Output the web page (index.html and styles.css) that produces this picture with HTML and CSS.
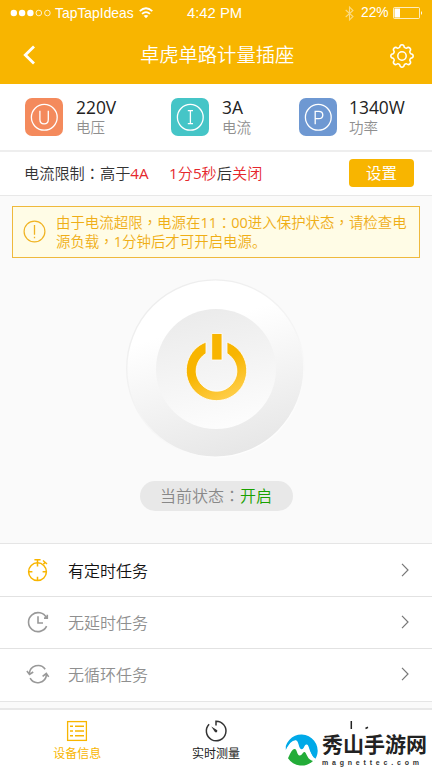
FILE: index.html
```html
<!DOCTYPE html>
<html lang="zh-CN">
<head>
<meta charset="utf-8">
<title>卓虎单路计量插座</title>
<link rel="stylesheet" href="styles.css">
</head>
<body>
<div class="app">
  <header class="header">
    <div class="status">
      <svg class="signal" width="41" height="12" viewBox="0 0 41 12"><g fill="#fff"><circle cx="3.8" cy="6" r="3.2"/><circle cx="12.1" cy="6" r="3.2"/><circle cx="20.4" cy="6" r="3.2"/></g><g fill="none" stroke="#fff" stroke-width=".8"><circle cx="28.8" cy="6" r="2.8"/><circle cx="37.4" cy="6" r="2.8"/></g></svg>
      <span class="carrier">TapTapIdeas</span>
      <svg class="wifi" width="14" height="12" viewBox="0 0 14 12"><g fill="none" stroke="#fff" stroke-width="1.8"><path d="M.7 4.2Q7-1.6 13.3 4.2M3 6.9Q7 3.3 11 6.9"/></g><path d="M4.6 8.8Q7 7 9.4 8.8L7 11.2Z" fill="#fff"/></svg>
      <span class="time">4:42 PM</span>
      <svg class="bluetooth" width="9" height="15" viewBox="0 0 9 15"><path d="M.7 4L8 10.5 4.5 14V1L8 4.5.7 11" fill="none" stroke="#fff" opacity=".5" stroke-width="1.1"/></svg>
      <span class="percent">22%</span>
      <svg class="battery" width="30" height="12" viewBox="0 0 30 12"><rect x=".5" y=".5" width="26" height="11" rx="1" fill="none" stroke="#fff" stroke-opacity=".75"/><path d="M1.5 1.5H7v9H1.5z" fill="#fff"/><path d="M28 4q2 2 0 4z" fill="#fff"/></svg>
    </div>
    <div class="navbar">
      <svg class="back" width="13" height="20" viewBox="0 0 13 20"><path d="M11 1.5L2.3 10 11 18.5" fill="none" stroke="#fff" stroke-width="2.8"/></svg>
      <h1>卓虎单路计量插座</h1>
      <svg class="gear" width="26" height="26" viewBox="0 0 26 26"><g fill="none" stroke="#fff" stroke-width="1.5" stroke-linejoin="round"><path d="M10.7 4.3Q11 1.8 13 1.8T15.3 4.3Q16.2 5.3 17.5 5.2Q19.4 3.6 20.9 5.1T20.8 8.5Q20.7 9.8 21.7 10.7Q24.2 11 24.2 13T21.7 15.3Q20.7 16.2 20.8 17.5Q22.4 19.4 20.9 20.9T17.5 20.8Q16.2 20.7 15.3 21.7Q15 24.2 13 24.2T10.7 21.7Q9.8 20.7 8.5 20.8Q6.6 22.4 5.1 20.9T5.2 17.5Q5.3 16.2 4.3 15.3Q1.8 15 1.8 13T4.3 10.7Q5.3 9.8 5.2 8.5Q3.6 6.6 5.1 5.1T8.5 5.2Q9.8 5.3 10.7 4.3Z"/><circle cx="13" cy="13" r="4.2"/></g></svg>
    </div>
  </header>

  <section class="metrics">
    <div class="metric">
      <svg class="badge voltage" width="38" height="38" viewBox="0 0 38 38"><g fill="none" stroke="#fff" stroke-width="1.3"><circle cx="19.3" cy="19.3" r="12.9"/><path d="M14.9 12.8V21.5Q14.9 25.8 19.1 25.8T23.3 21.5V12.8"/></g></svg>
      <div><div class="value">220V</div><div class="label">电压</div></div>
    </div>
    <div class="metric">
      <svg class="badge current" width="38" height="38" viewBox="0 0 38 38"><g fill="none" stroke="#fff" stroke-width="1.3"><circle cx="19.3" cy="19.3" r="12.9"/><path d="M16.8 12.7H22M16.8 25.7H22M19.4 12.7V25.7"/></g></svg>
      <div><div class="value">3A</div><div class="label">电流</div></div>
    </div>
    <div class="metric">
      <svg class="badge power" width="38" height="38" viewBox="0 0 38 38"><g fill="none" stroke="#fff" stroke-width="1.3"><circle cx="19.3" cy="19.3" r="12.9"/><path d="M16.2 26.3V13.3H19.7Q23.8 13.3 23.8 16.9T19.7 20.7H16.2"/></g></svg>
      <div><div class="value">1340W</div><div class="label">功率</div></div>
    </div>
  </section>

  <section class="limit">
    <span class="limit-text">电流限制<i lang="zh-TW">：</i>高于<em><b>4A</b></em></span>
    <span class="limit-time"><em><b>1</b>分<b>5</b>秒</em>后<em>关闭</em></span>
    <button class="set">设置</button>
  </section>

  <main class="control">
    <div class="notice">
      <svg width="23" height="23" viewBox="0 0 23 23"><circle cx="11.5" cy="11.5" r="10.4" fill="none" stroke="#f0b323" stroke-width="1.2"/><path d="M11.5 5V14.8M11.5 16.7V18.2" stroke="#f0b323" stroke-width="1.3"/></svg>
      <p>由于电流超限<i lang="zh-TW">，</i>电源在<b>11</b><i lang="zh-TW">：</i><b>00</b>进入保护状态<i lang="zh-TW">，</i>请检查电<br>源负载<i lang="zh-TW">，</i><b>1</b>分钟后才可开启电源。</p>
    </div>
    <svg class="dial" width="184" height="184" viewBox="0 0 184 184">
      <defs>
        <linearGradient id="outer" x1=".35" y1="0" x2=".65" y2="1"><stop offset=".25" stop-color="#fff"/><stop offset="1" stop-color="#e6e6e6"/></linearGradient>
        <linearGradient id="rim" x1=".2" y1="0" x2=".8" y2="1"><stop offset="0" stop-color="#ececec"/><stop offset=".5" stop-color="#f4f4f4"/><stop offset="1" stop-color="#fff"/></linearGradient>
        <linearGradient id="inner" x1=".38" y1="0" x2=".62" y2="1"><stop offset="0" stop-color="#ebebeb"/><stop offset="1" stop-color="#fdfdfd"/></linearGradient>
        <linearGradient id="gold" x1=".25" y1="0" x2=".75" y2="1"><stop offset=".4" stop-color="#f8b500"/><stop offset="1" stop-color="#ffd050"/></linearGradient>
      </defs>
      <circle cx="91.3" cy="92.5" r="88.6" fill="url(#outer)" stroke="url(#rim)" stroke-width="1.4"/>
      <circle cx="92" cy="93" r="60" fill="url(#inner)"/>
      <g stroke="#fff" stroke-opacity=".8" stroke-width="1">
        <path d="M82 66.1A30.2 30.2 0 1 0 103 66.1V77.4A20.4 20.4 0 1 1 82 77.4Z" fill="url(#gold)"/>
        <path d="M87.7 57.5H98V84H87.7Z" fill="#f8b500"/>
      </g>
    </svg>
    <div class="state">当前状态<i lang="zh-TW">：</i><span class="on">开启</span></div>
  </main>

  <ul class="tasks">
    <li class="active">
      <svg width="24" height="24" viewBox="0 0 24 24"><g fill="none" stroke="#f8b500" stroke-width="1.5"><circle cx="11.5" cy="13.7" r="8.9"/><path d="M8.4 1.8H14.6M11.5 1.8V5M17 2.5L21 6M19.2 4.2L17.4 6.3M11.5 5V8.6M11.5 18.8V22.3M2.8 13.7H6.4M16.6 13.7H20.2"/></g></svg>
      <span>有定时任务</span>
      <svg class="arrow" width="8" height="14" viewBox="0 0 8 14"><path d="M1 .8L7 7 1 13.2"/></svg>
    </li>
    <li>
      <svg width="24" height="24" viewBox="0 0 24 24"><g fill="none" stroke="#999" stroke-width="1.6"><path d="M20.5 7.8A9.5 9.5 0 1 0 20.6 16.2M21.3 4.8V8.1H18M12 6.3V13H17"/></g></svg>
      <span>无延时任务</span>
      <svg class="arrow" width="8" height="14" viewBox="0 0 8 14"><path d="M1 .8L7 7 1 13.2"/></svg>
    </li>
    <li>
      <svg width="24" height="24" viewBox="0 0 24 24"><g fill="none" stroke="#999" stroke-width="1.6"><path d="M3.3 11.5A8.8 8.8 0 0 1 19.2 7.2M20.5 12.6A8.8 8.8 0 0 1 4.1 16.2M.9 9.1L3.5 12.5 7.2 10M16.6 14.3L20.3 11.5 22.7 14.9"/></g></svg>
      <span>无循环任务</span>
      <svg class="arrow" width="8" height="14" viewBox="0 0 8 14"><path d="M1 .8L7 7 1 13.2"/></svg>
    </li>
  </ul>

  <nav class="tabs">
    <a class="tab selected">
      <svg width="22" height="22" viewBox="0 0 22 22"><g fill="none" stroke="#f8b500"><rect x="1.6" y="1.6" width="18.8" height="18.8" stroke-width="1.3"/><path d="M4 6.2H7M4 11H7M4 15.8H7M9 6.2H18M9 11H18M9 15.8H18" stroke-width="1.6"/></g></svg>
      <span>设备信息</span>
    </a>
    <a class="tab">
      <svg width="22" height="22" viewBox="0 0 22 22"><path d="M11 5.4V1.2A9.8 9.8 0 1 1 4.1 4.2" fill="none" stroke="#333" stroke-width="1.5"/><path d="M6.3 6.5L12.3 10.3 12 12.2 10.1 12.2Z" fill="#333"/></svg>
      <span>实时测量</span>
    </a>
    <a class="tab">
      <svg width="22" height="22" viewBox="0 0 22 22"><path d="M7.3 1V9M21.5 8.5L24 7.3" stroke="#222" stroke-width="1.5"/></svg>
    </a>
    <div class="brand">
      <svg width="34" height="34" viewBox="0 0 34 34"><path d="M.8 14A16.3 16.3 0 1 1 29.5 28.5L22 13 16 19.5 10.5 8.5Q4 11 .8 18Z" fill="#00a9e8"/><path d="M.8 19Q5 8 10.8 8.2C14 8.5 13.5 17 16.5 17.2S19 12 21.8 12.5C25 13 23.5 23 31 27L27.5 30.3 20 20 14 25 9 17Q4 18 .8 19Z" fill="#fff"/><path d="M3 26.3Q7 16.5 9.8 17C12 17.2 12 23.3 14.7 23.5S18 19 20 20.3C22 22 22.5 28 28 28.9A16.3 16.3 0 0 1 3 26.3Z" fill="#23ac38"/></svg>
      <div><div class="brand-name">秀山手游网</div><div class="brand-url">magnettec.com</div></div>
    </div>
  </nav>
</div>
</body>
</html>
```

FILE: styles.css
```css
* { box-sizing: border-box; margin: 0; padding: 0; }
body { font-family: "Open Sans", "Noto Sans CJK SC", sans-serif; color: #333; background: #fafafa; }
svg { display: block; flex: none; overflow: visible; }
em { font-style: normal; color: #e5282d; }
/* latin digits keep the regular weight beside the lighter CJK text */
b { font-weight: 400; }
/* full-width punctuation centred in its cell */
i { font-style: normal; font-family: "Noto Sans CJK TC", sans-serif; line-height: 1; }
.app { width: 432px; height: 768px; overflow: hidden; display: flex; flex-direction: column; }

.header { height: 84px; flex: none; background: #f8b500; color: #fff; }
.status { height: 26px; display: flex; align-items: center; padding-left: 10px; font: 13.9px/26px "Liberation Sans", sans-serif; white-space: nowrap; }
.carrier { width: 79px; margin-left: 4px; }
.wifi { margin-left: 5px; }
.time { width: 57px; margin-left: 34px; font-size: 14.8px; }
.bluetooth { margin-left: 101px; }
.percent { width: 28px; margin-left: 7px; font-size: 13.8px; }
.battery { margin-left: 4px; }
.navbar { height: 58px; display: flex; align-items: center; padding-left: 23px; }
.back { margin-right: 104px; }
h1 { width: 154px; font-size: 19.3px; line-height: 28px; font-weight: 350; white-space: nowrap; }
.gear { margin: 2px 0 0 95px; }

.metrics { height: 68px; flex: none; display: grid; grid-template-columns: 146px 128px 1fr; padding: 14px 0 0 25px; background: #fff; border-bottom: 2px solid #eee; }
.metric { display: flex; gap: 13px; }
.metric:last-child { gap: 12px; }
.badge { border-radius: 7px; }
.voltage { background: #f48a5c; }
.current { background: #45c5c7; }
.power { background: #6e98d2; }
.value { font-size: 17.4px; line-height: 19px; color: #222; }
.label { font: 350 14.5px/20px "Noto Sans CJK SC", sans-serif; color: #8f8f8f; }

.limit { height: 44px; flex: none; display: flex; align-items: center; padding-left: 24px; background: #fff; border-bottom: 1px solid #e8e8e8; font-size: 15.2px; font-weight: 350; white-space: nowrap; }
.limit span { margin-top: -3px; }
.limit-text { width: 145px; }
.limit-time { width: 180px; }
.set { width: 65px; height: 28px; margin-top: -1px; padding-bottom: 2px; border: 0; border-radius: 4px; background: #f8b500; color: #fff; font: 15.4px/26px "Noto Sans CJK SC", sans-serif; }

.control { height: 347px; flex: none; display: flex; flex-direction: column; align-items: center; padding-top: 10px; }
.notice { width: 408px; height: 52px; display: flex; padding: 13px 0 0 10px; border: 1px solid #efb93c; background: #fffce6; }
.notice p { margin: -7px 0 0 10px; font-size: 14.45px; line-height: 19px; font-weight: 350; color: #efae16; white-space: nowrap; }
.dial { margin-top: 18px; }
.state { width: 153px; height: 30px; margin-top: 21px; border-radius: 15px; background: #e8e8e8; text-align: center; font-size: 16px; line-height: 30px; font-weight: 350; color: #888; white-space: nowrap; }
.on { color: #19a100; }

.tasks { list-style: none; flex: none; height: 159px; background: #fff; border-top: 1px solid #e5e5e5; border-bottom: 1px solid #e5e5e5; }
.tasks li { height: 52px; display: flex; align-items: center; padding: 0 23px 1px 26px; font-size: 16px; font-weight: 350; color: #8f8f8f; }
.tasks li:first-child { padding-bottom: 0; }
.tasks li:last-child { height: 53px; padding-bottom: 2px; }
.tasks li + li { border-top: 1px solid #e2e2e2; }
.tasks .active { color: #111; }
.tasks span { flex: 1; margin: -1px 0 0 18px; }
.arrow path { fill: none; stroke: #777; stroke-width: 1.2; }

.tabs { position: relative; height: 60px; flex: none; margin-top: 6px; padding: 10px 8px 0; display: grid; grid-template-columns: repeat(3, 1fr); border-top: 2px solid #e8e8e8; background: #fff; }
.tab { display: flex; flex-direction: column; align-items: center; font-size: 12px; line-height: 18px; color: #222; }
.tab span { margin-top: 3px; }
.selected { color: #f8b500; }
.brand { position: absolute; left: 285px; top: 22px; display: flex; gap: 3px; }
.brand-name { margin-top: -3px; font: 700 21px/29px "Noto Sans CJK SC", sans-serif; color: #222; white-space: nowrap; }
.brand-url { font: bold 7px/8px "Liberation Sans", sans-serif; letter-spacing: 3.8px; margin-top: 1px; color: #333; white-space: nowrap; }
```
